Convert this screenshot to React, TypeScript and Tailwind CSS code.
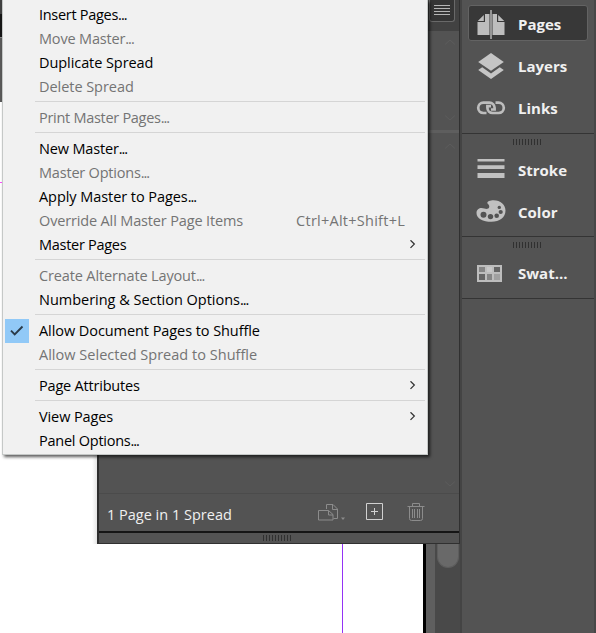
import React from "react";

type Entry = {
  label?: string;
  off?: boolean;
  shortcut?: string;
  sub?: boolean;
  checked?: boolean;
  more?: boolean;
  track?: string;
};

const entries: Entry[] = [
  { label: "Insert Pages", more: true, track: "tracking-[-0.29px]" },
  { label: "Move Master", more: true, off: true, track: "tracking-[-0.17px]" },
  { label: "Duplicate Spread", track: "tracking-[-0.07px]" },
  { label: "Delete Spread", off: true, track: "tracking-[-0.05px]" },
  {},
  { label: "Print Master Pages", more: true, off: true, track: "tracking-[-0.29px]" },
  {},
  { label: "New Master", more: true, track: "tracking-[-0.16px]" },
  { label: "Master Options", more: true, off: true, track: "tracking-[-0.2px]" },
  { label: "Apply Master to Pages", more: true, track: "tracking-[-0.06px]" },
  { label: "Override All Master Page Items", off: true, shortcut: "Ctrl+Alt+Shift+L", track: "tracking-[-0.15px]" },
  { label: "Master Pages", sub: true, track: "tracking-[-0.28px]" },
  {},
  { label: "Create Alternate Layout", more: true, off: true, track: "tracking-[-0.14px]" },
  { label: "Numbering & Section Options", more: true, track: "tracking-[-0.02px]" },
  {},
  { label: "Allow Document Pages to Shuffle", checked: true, track: "tracking-[-0.07px]" },
  { label: "Allow Selected Spread to Shuffle", off: true, track: "tracking-[0.02px]" },
  {},
  { label: "Page Attributes", sub: true, track: "tracking-[-0.2px]" },
  {},
  { label: "View Pages", sub: true, track: "tracking-[-0.1px]" },
  { label: "Panel Options", more: true, track: "tracking-[-0.25px]" },
];

function MenuRow({ e }: { e: Entry }) {
  if (!e.label)
    return (
      <div className="h-[7px] pt-[2px] pr-[2px] pl-8">
        <div className="h-px bg-[#d5d5d5]" />
      </div>
    );
  return (
    <div className={"flex h-6 items-center " + (e.off ? "text-[#747474]" : "text-black")}>
      <div className={"mr-[10px] ml-[2px] flex h-6 w-6 shrink-0 items-center justify-center " + (e.checked ? "bg-[#91c9f7]" : "")}>
        {e.checked && (
          <svg width="14" height="12" viewBox="0 0 14 12" fill="none" stroke="#2b3b49" strokeWidth="1.9">
            <path d="M1 5.6 4.7 9.3 12.5 1.5" />
          </svg>
        )}
      </div>
      <span className={"text-[14.5px] leading-6 whitespace-nowrap " + e.track}>
        {e.label}
        {e.more && <span className="tracking-[-1px]">...</span>}
      </span>
      {e.shortcut && (
        <span className="mr-[22px] ml-auto text-[14.5px] leading-6 tracking-[0.25px] whitespace-nowrap">{e.shortcut}</span>
      )}
      {e.sub && (
        <svg className="mr-[11px] ml-auto" width="7" height="10" viewBox="0 0 7 10" fill="none" stroke="#333" strokeWidth="1.3">
          <path d="M1.5 .3 5.3 4.1 1.5 7.9" />
        </svg>
      )}
    </div>
  );
}

function Grip() {
  return (
    <div className="flex gap-[2px]">
      {Array.from({ length: 10 }, (_, i) => (
        <i key={i} className="h-[6px] w-px bg-[#303030]" />
      ))}
    </div>
  );
}

function DockItem({ label, active, low, children }: { label: string; active?: boolean; low?: boolean; children: React.ReactNode }) {
  return (
    <div
      className={
        "ml-[6px] flex h-9 w-[120px] shrink-0 items-center rounded-[3px] border " +
        (active ? "border-[#636363] bg-[#383838]" : "border-transparent")
      }
    >
      <div className="ml-[6px] flex w-[32px] items-center justify-center">{children}</div>
      <span className={"ml-[11px] text-[15px] leading-5 font-bold whitespace-nowrap text-[#f0f0f0] " + (low ? "pt-[2px]" : "")}>
        {label}
      </span>
    </div>
  );
}

function Dock() {
  return (
    <div className="flex min-w-0 flex-1 flex-col border-r-2 border-l-2 border-r-[#474747] border-l-[#444] bg-[#535353]">
      <div className="flex h-[134px] flex-col gap-[6px] border-b border-[#343434] pt-[5px]">
        <DockItem label="Pages" active low>
          <svg className="mt-[3px]" width="28" height="30" viewBox="0 0 28 30">
            <path d="M8 4H12.5V25H.5V12H8ZM15.5 4H20V12H27.5V25H15.5Z" fill="#bdbdbd" />
            <path d="M6.8 5V11H.8ZM21.2 5V11H27.2Z" fill="#bdbdbd" />
            <path d="M14 0V29" stroke="#bdbdbd" strokeWidth="1.4" />
          </svg>
        </DockItem>
        <DockItem label="Layers" low>
          <svg className="mt-[2px]" width="28" height="28" viewBox="0 0 28 28" fill="#c5c5c5">
            <path d="M14 1 26.8 10 14 18.7 1.2 10Z" />
            <path d="M1.2 18 5.2 15.3 14 21.6 22.8 15.3 26.8 18 14 27Z" />
          </svg>
        </DockItem>
        <DockItem label="Links" low>
          <svg className="mt-[2px]" width="30" height="16" viewBox="0 0 30 16" fill="none" stroke="#bdbdbd" strokeWidth="2.7">
            <path d="M10.5 13H7.4A5.2 5.2 0 0 1 7.4 2.6H13.4A5.2 5.2 0 0 1 18.6 7.8V9.5H15" />
            <path d="M19.5 2.6H22.6A5.2 5.2 0 0 1 22.6 13H16.6A5.2 5.2 0 0 1 11.4 7.8V6.2H15" />
          </svg>
        </DockItem>
      </div>
      <div className="flex h-[103px] flex-col border-b border-[#343434]">
        <div className="flex h-[18px] shrink-0 items-start pt-[5px] pl-[51px]"><Grip /></div>
        <DockItem label="Stroke">
          <svg className="-mt-[2px]" width="28" height="20" viewBox="0 0 28 20" fill="#c1c1c1">
            <path d="M.5 0H27.5V2.4H.5ZM.5 6.2H27.5V10H.5ZM.5 14H27.5V19H.5Z" />
          </svg>
        </DockItem>
        <div className="h-[6px]" />
        <DockItem label="Color">
          <svg className="-mt-[3px]" width="30" height="24" viewBox="0 0 30 24">
            <path d="M11.5 4.5C10.5 2 14.5 1.2 17.5 1.2C24.5 1.2 29.5 5.5 29.5 11.5C29.5 18.5 23.5 22.8 15.5 22.8C7 22.8 .5 19.5 .5 14C.5 10.5 3 9 5.5 9C8 9 9.5 10.2 11.5 9.8C14 9.2 13.8 6.3 11.5 4.5Z" fill="#c1c1c1" />
            <g fill="#535353">
              <circle cx="7.5" cy="15.7" r="3" />
              <circle cx="14.5" cy="17.6" r="2.7" />
              <circle cx="20.7" cy="16.7" r="2.3" />
              <circle cx="24.7" cy="13" r="2.1" />
              <circle cx="23.3" cy="8.4" r="1.7" />
            </g>
          </svg>
        </DockItem>
      </div>
      <div className="flex h-[62px] flex-col border-b border-[#343434]">
        <div className="flex h-[18px] shrink-0 items-start pt-[5px] pl-[51px]"><Grip /></div>
        <DockItem label="Swat...">
          <div className="mr-[3px] grid h-[17px] w-[25px] grid-cols-3 gap-[2px] border border-[#bdbdbd] bg-[#bdbdbd] p-px">
            <i className="bg-[#858585]" /><i className="bg-[#c8c8c8]" /><i className="bg-[#656565]" />
            <i className="bg-[#656565]" /><i className="bg-[#858585]" /><i className="bg-[#a0a0a0]" />
          </div>
        </DockItem>
      </div>
    </div>
  );
}

function PagesPanel() {
  return (
    <div className="flex h-full w-[362px] flex-col border-l-2 border-[#2e2e2e] bg-[#535353]">
      <div className="flex h-[31px] shrink-0 justify-end bg-[#424242] pr-1">
        <div className="flex h-[22px] w-[26px] justify-center rounded-b-[3px] border border-t-0 border-[#696969] bg-[#353535] pt-[5px]">
          <svg width="16" height="11" viewBox="0 0 16 11" stroke="#b5b5b5" shapeRendering="crispEdges">
            <path d="M0 .5H16M0 3.5H16M0 6.5H16M0 9.5H16" />
          </svg>
        </div>
      </div>
      <div className="flex h-[99px] flex-col justify-between pt-[8px] pr-[3px] pb-[9px]">
        <Chevron up /><Chevron />
      </div>
      <div className="h-[3px] bg-[#5e5e5e]" />
      <div className="flex h-[361px] flex-col justify-between border-b border-[#4b4b4b] pt-[10px] pr-[3px] pb-[6px]">
        <Chevron up /><Chevron />
      </div>
      <div className="flex h-[37px] items-center pl-2">
        <span className="w-[211px] pt-[4px] text-[14.5px] leading-5 whitespace-nowrap text-[#f0f0f0]">1 Page in 1 Spread</span>
        <svg className="-mt-px" width="28" height="18" viewBox="0 0 28 18" fill="none" stroke="#8c8c8c">
          <path d="M8.5 6V1.5H15L19.5 6V15.5H15.5M14.5 1.5V6.5H19.5M.5 7.5H10.5L15 11.5V17H.5ZM10.5 7.5V12H15" />
          <path d="M23 14.5H27L25 17Z" fill="#8c8c8c" stroke="none" />
        </svg>
        <svg className="-mt-[2px] ml-[20px]" width="17" height="17" viewBox="0 0 17 17" fill="none" stroke="#d0d0d0">
          <path d="M.5 .5H16.5V16.5H.5ZM8.5 5V12M5 8.5H12" />
        </svg>
        <svg className="-mt-px ml-[24px]" width="18" height="18" viewBox="0 0 18 18" fill="none" stroke="#8c8c8c">
          <path d="M.5 3.5H17.5M5.5 3V.5H12.5V3M2.5 4V15.5Q2.5 17.5 4.5 17.5H13.5Q15.5 17.5 15.5 15.5V4M5.5 6V15M7.5 6V15M10.5 6V15M12.5 6V15" />
        </svg>
      </div>
      <div className="h-[2px] bg-[#151515]" />
      <div className="-ml-px flex h-[11px] items-center justify-center border-b border-[#303030] pr-[3px] pb-px"><Grip /></div>
    </div>
  );
}

function Chevron({ up }: { up?: boolean }) {
  return (
    <svg className="ml-auto shrink-0" width="12" height="6" viewBox="0 0 12 6" fill="none" stroke="#5c5c5c">
      <path d={up ? "M1 5.5 6 1 11 5.5" : "M1 .5 6 5 11 .5"} />
    </svg>
  );
}

export default function App() {
  return (
    <div className="relative flex h-[633px] w-[596px] overflow-hidden bg-white font-['Open_Sans','Noto_Sans',sans-serif]">
      <div className="flex w-[460px] shrink-0 flex-col">
        <div className="flex h-[544px] shrink-0">
          <div className="flex w-[97px] flex-col">
            <div className="h-[14px] bg-[#424242]" />
            <div className="h-[23px] bg-[#171717]" />
            <div className="h-[65px] border-t border-[#888] bg-[#5a5a5a]" />
            <div className="mt-20 h-px bg-[#ff4bff]" />
            <div className="ml-auto w-[5px] flex-1 bg-linear-to-r from-white to-[#e6e6e6]" />
          </div>
          <PagesPanel />
          <div className="w-px bg-[#303030]" />
        </div>
        <div className="flex flex-1">
          <div className="w-[342px]" />
          <div className="w-px bg-[#9333f5]" />
          <div className="w-20" />
          <div className="w-[3px] bg-black" />
          <div className="w-[9px] bg-[#5f5f5f]" />
          <div className="flex flex-1 justify-center bg-[#494949]">
            <div className="h-6 w-[22px] rounded-b-full border border-t-0 border-[#5d5d5d] bg-[#696969]" />
          </div>
        </div>
      </div>
      <Dock />
      <div className="absolute top-0 left-[2px] h-[455px] w-[426px] border border-t-0 border-[#c5c8c7] bg-[#f1f1f1] pt-[3px] shadow-[2px_2px_3px_rgba(0,0,0,0.65)]">
        {entries.map((e, i) => (
          <MenuRow key={i} e={e} />
        ))}
      </div>
    </div>
  );
}
